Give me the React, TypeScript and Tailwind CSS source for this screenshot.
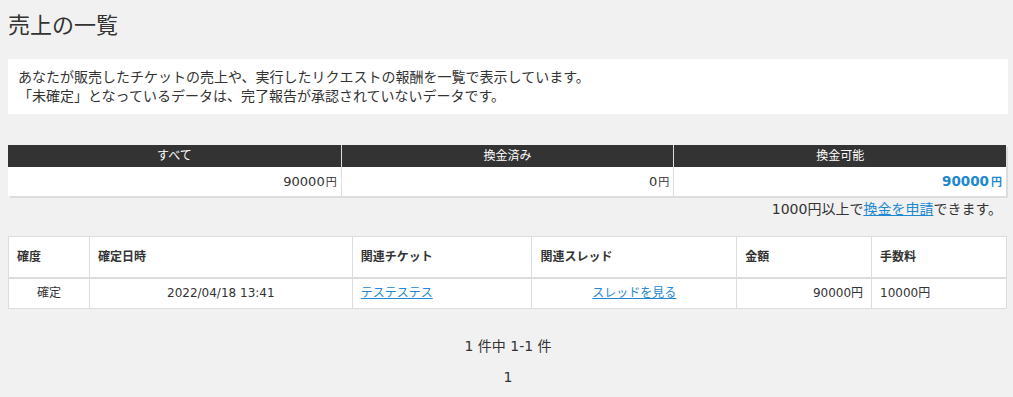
const font = { fontFamily: '"DejaVu Sans", "Noto Sans CJK JP", sans-serif' }

const summary = [
  { label: 'すべて', value: '90000', strong: false },
  { label: '換金済み', value: '0', strong: false },
  { label: '換金可能', value: '90000', strong: true },
]

const columns = [
  { label: '確度', w: 'w-[81px]' },
  { label: '確定日時', w: 'w-[263px]' },
  { label: '関連チケット', w: 'w-[180px]' },
  { label: '関連スレッド', w: 'w-[205px]' },
  { label: '金額', w: 'w-[135px]' },
  { label: '手数料', w: 'w-[135px]' },
]

export default function App() {
  return (
    <div className="min-h-[397px] bg-[#f1f1f1] pl-2 pr-[5px] text-[#333]" style={font}>
      <h1 className="pt-[11px] text-[22px] leading-[30px] font-normal">売上の一覧</h1>

      <div className="mt-[18px] bg-white px-[10px] pt-[9px] pb-[8px] text-[14px] leading-[19px]">
        <p>あなたが販売したチケットの売上や、実行したリクエストの報酬を一覧で表示しています。</p>
        <p>「未確定」となっているデータは、完了報告が承認されていないデータです。</p>
      </div>

      <div className="mt-[31px] mr-[2px] shadow-[2px_2px_0_#dddddd]">
        <div className="grid grid-cols-3 bg-[#333333] text-white">
          {summary.map((s, i) => (
            <div
              key={s.label}
              className={`h-[22px] text-center text-[12px] leading-[22px] ${i > 0 ? 'border-l border-[#dddddd]' : ''}`}
            >
              {s.label}
            </div>
          ))}
        </div>
        <div className="grid grid-cols-3 bg-white">
          {summary.map((s, i) => (
            <div
              key={s.label}
              className={`flex h-[29px] items-center justify-end pr-[4px] ${i > 0 ? 'border-l border-[#dddddd]' : ''}`}
            >
              {s.strong ? (
                <span className="text-[13.5px] font-bold text-[#1e88d0]">
                  {s.value}
                  <span className="ml-[2px] text-[11px]">円</span>
                </span>
              ) : (
                <span className="text-[13px]">
                  {s.value}
                  <span className="ml-[1px] text-[11px]">円</span>
                </span>
              )}
            </div>
          ))}
        </div>
      </div>

      <p className="mt-[3px] pr-[6px] text-right text-[14px] leading-[20px]">
        1000円以上で
        <a href="#" className="text-[#1e88d0] underline">
          換金を申請
        </a>
        できます。
      </p>

      <table className="mt-[17px] w-[999px] border-collapse bg-white text-[12px]">
        <thead>
          <tr>
            {columns.map((c) => (
              <th
                key={c.label}
                className={`${c.w} h-[41px] border border-b-2 border-[#dddddd] px-[8px] text-left font-bold`}
              >
                {c.label}
              </th>
            ))}
          </tr>
        </thead>
        <tbody>
          <tr>
            <td className="h-[31px] border border-[#dddddd] px-[8px] text-center">確定</td>
            <td className="border border-[#dddddd] px-[8px] text-center">2022/04/18 13:41</td>
            <td className="border border-[#dddddd] px-[8px]">
              <a href="#" className="text-[#1e88d0] underline">
                テステステス
              </a>
            </td>
            <td className="border border-[#dddddd] px-[8px] text-center">
              <a href="#" className="text-[#1e88d0] underline">
                スレッドを見る
              </a>
            </td>
            <td className="border border-[#dddddd] px-[8px] text-right">90000円</td>
            <td className="border border-[#dddddd] px-[8px]">10000円</td>
          </tr>
        </tbody>
      </table>

      <div className="mt-[27px] text-center text-[14px] leading-[20px]">1 件中 1-1 件</div>
      <div className="mt-[11px] text-center text-[14px] leading-[20px]">1</div>
    </div>
  )
}
